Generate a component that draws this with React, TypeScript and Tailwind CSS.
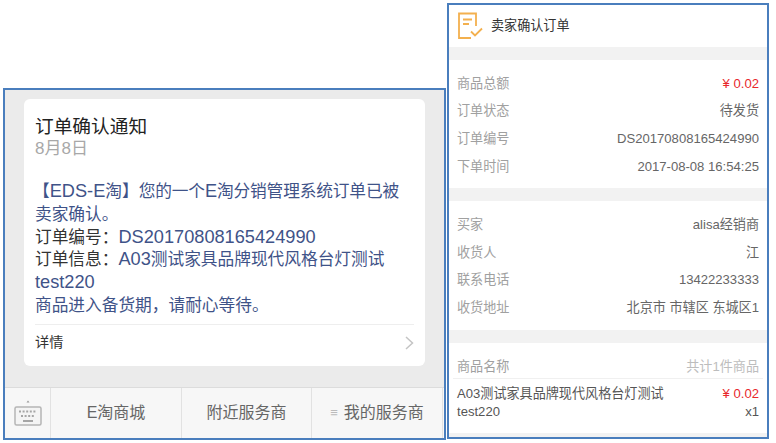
const sans = "font-['Liberation_Sans','Noto_Sans_CJK_SC',sans-serif]";
const latin = "text-[18.2px] leading-none";

function Row({ label, value, valueClass }: { label: string; value: string; valueClass?: string }) {
  return (
    <div className="flex h-[27.6px] items-center justify-between">
      <span className="text-[#a0a0a0]">{label}</span>
      <span className={valueClass ?? "text-[#666]"}>{value}</span>
    </div>
  );
}

function KeyboardIcon() {
  return (
    <svg width="28" height="30" viewBox="0 0 28 30" fill="none">
      <path d="M12.500 4.500 14 2.500l1.500 2z" fill="#999" />
      <rect x="1" y="9" width="26" height="18" rx="1.500" fill="#f4f4f4" stroke="#b5b5b5" strokeWidth="1.500" />
      <path d="M5 13.500h18M7 18h14" stroke="#a5a5a5" strokeWidth="2" strokeDasharray="2 1.600" />
      <path d="M9 23h10" stroke="#a5a5a5" strokeWidth="2" />
    </svg>
  );
}

function OrderIcon() {
  return (
    <svg width="26" height="28" viewBox="0 0 26 28" fill="none" stroke="#f3b04e" strokeWidth="1.800">
      <path d="M19 14V1.500H2v24.500h12" />
      <path d="M6 7.500h9M6 12h6" />
      <path d="M14 19.500l4 4 7-7" />
    </svg>
  );
}

function WechatMessage() {
  return (
    <div className="mt-[88px] flex h-[352px] w-[443px] flex-col border-2 border-[#4a7ebd] bg-[#ebebeb]">
      <div className="mx-[19px] mt-[9px] flex h-[267px] flex-col rounded-md bg-white px-[11px]">
        <div className="mt-[16px] text-[18.700px] leading-[24px] text-[#222]">订单确认通知</div>
        <div className="mt-[-1px] text-[17px] leading-[22px] text-[#a8a8a8]">8月8日</div>
        <div className="mt-[21px] text-[16.700px] leading-[22.800px] text-[#3f5388]">
          <div>
            <span className="ml-[-2px]">【</span>
            <span className={latin}>EDS-E</span>淘】
            <span className="tracking-[-0.13px]">
              您的一个<span className={latin}>E</span>淘分销管理系统订单已被
            </span>
            <br />
            卖家确认。
          </div>
          <div>
            <span className="text-[#333]">订单编号{"\uFF1A"}</span>
            <span className={latin}>DS20170808165424990</span>
          </div>
          <div>
            <span className="text-[#333]">订单信息{"\uFF1A"}</span>
            <span className={latin}>A03</span>测试家具品牌现代风格台灯测试
            <br />
            <span className={latin}>test220</span>
          </div>
          <div>商品进入备货期{"\uFF0C"}请耐心等待。</div>
        </div>
        <div className="mt-[6px] flex h-[42px] items-center justify-between border-t border-[#eeeeee] pb-[5px]">
          <span className="text-[14.200px] text-[#333]">详情</span>
          <svg width="9" height="14" viewBox="0 0 9 14" fill="none" stroke="#c4c4c4" strokeWidth="1.500">
            <path d="M1 1l6.500 6L1 13" />
          </svg>
        </div>
      </div>
      <div className="mt-auto flex h-[51px] border-t border-[#dcdcdc] bg-[#f7f7f7] text-[16px] text-[#666]">
        <div className="flex w-[46px] items-center justify-center border-r border-[#e2e2e2]">
          <KeyboardIcon />
        </div>
        <div className="flex w-[131px] items-center justify-center border-r border-[#e2e2e2]">E淘商城</div>
        <div className="flex w-[130px] items-center justify-center border-r border-[#e2e2e2]">附近服务商</div>
        <div className="flex w-[131px] items-center justify-center gap-[6px] border-r border-[#e2e2e2]">
          <span className="text-[13px] text-[#bbb]">≡</span>
          我的服务商
        </div>
      </div>
    </div>
  );
}

function OrderDetail() {
  return (
    <div className="ml-[1px] mt-[3px] flex h-[436px] w-[322px] flex-col overflow-hidden border-2 border-[#4a7ebd] bg-white text-[13.100px]">
      <div className="flex h-[42px] items-center gap-[8px] pl-[8px]">
        <OrderIcon />
        <span className="text-[#333]">卖家确认订单</span>
      </div>
      <div className="h-[13px] bg-[#f2f2f2]" />
      <div className="flex h-[128px] flex-col justify-center px-[8px] pt-[2px]">
        <Row label="商品总额" value="¥ 0.02" valueClass="text-[#e8272c]" />
        <Row label="订单状态" value="待发货" />
        <Row label="订单编号" value="DS20170808165424990" />
        <Row label="下单时间" value="2017-08-08 16:54:25" />
      </div>
      <div className="h-[13px] bg-[#f2f2f2]" />
      <div className="flex h-[129px] flex-col justify-center px-[8px] pt-[2px]">
        <Row label="买家" value="alisa经销商" />
        <Row label="收货人" value="江" />
        <Row label="联系电话" value="13422233333" />
        <Row label="收货地址" value="北京市 市辖区 东城区1" />
      </div>
      <div className="h-[13px] bg-[#f2f2f2]" />
      <div className="flex h-[90px] flex-col px-[8px]">
        <div className="mx-[-4px] flex h-[36px] items-center justify-between border-b border-[#f0f0f0] px-[4px] pt-[14px] pb-[2px]">
          <span className="text-[#a0a0a0]">商品名称</span>
          <span className="text-[#bdbdbd]">共计1件商品</span>
        </div>
        <div className="mt-[6px] flex justify-between leading-[18px] text-[#555]">
          <span>
            A03测试家具品牌现代风格台灯测试
            <br />
            test220
          </span>
          <span className="text-right">
            <span className="text-[#e8272c]">¥ 0.02</span>
            <br />
            x1
          </span>
        </div>
      </div>
      <div className="flex-1 bg-[#f2f2f2]" />
    </div>
  );
}

export default function App() {
  return (
    <div className={`flex h-[443px] w-[776px] items-start bg-white pl-[3px] ${sans}`}>
      <WechatMessage />
      <OrderDetail />
    </div>
  );
}
